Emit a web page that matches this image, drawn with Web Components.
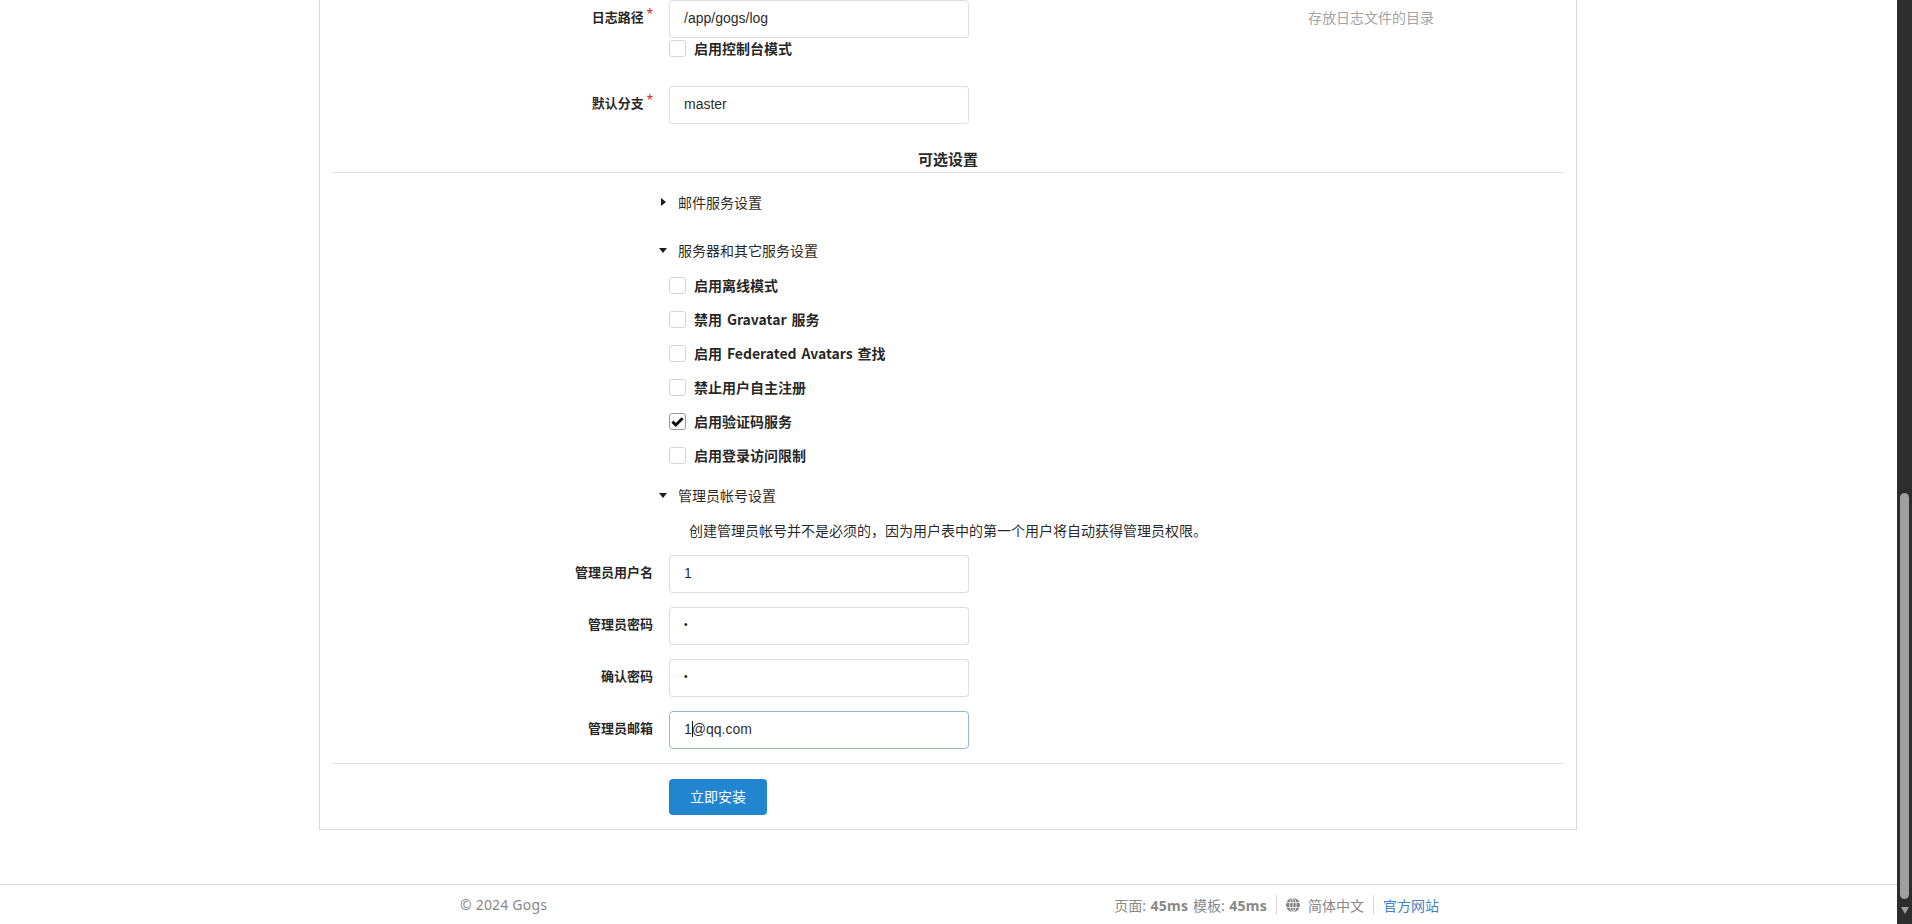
<!DOCTYPE html>
<html lang="zh-CN">
<head>
<meta charset="utf-8">
<title>Gogs install</title>
<style>
  html, body { margin: 0; height: 100%; overflow: hidden; background: #fff; }
  body { font-family: "Liberation Sans", "Noto Sans CJK SC", sans-serif; font-size: 14px; color: rgba(0,0,0,.87); }
</style>
</head>
<body>
<page-shell>
  <install-card>
    <form-field label="日志路径" required value="/app/gogs/log" hint="存放日志文件的目录" first></form-field>
    <check-field style="margin-top:2px">启用控制台模式</check-field>
    <form-field label="默认分支" required value="master" style="margin-top:29px"></form-field>

    <section-title>可选设置</section-title>

    <section-toggle style="margin-top:20px">邮件服务设置</section-toggle>
    <section-toggle open style="margin-top:28px">服务器和其它服务设置</section-toggle>

    <check-field style="margin-top:16px">启用离线模式</check-field>
    <check-field style="margin-top:17px">禁用 Gravatar 服务</check-field>
    <check-field style="margin-top:17px">启用 Federated Avatars 查找</check-field>
    <check-field style="margin-top:17px">禁止用户自主注册</check-field>
    <check-field checked style="margin-top:17px">启用验证码服务</check-field>
    <check-field style="margin-top:17px">启用登录访问限制</check-field>

    <section-toggle open style="margin-top:22px">管理员帐号设置</section-toggle>
    <admin-note>创建管理员帐号并不是必须的，因为用户表中的第一个用户将自动获得管理员权限。</admin-note>

    <form-field label="管理员用户名" value="1" style="margin-top:14px"></form-field>
    <form-field label="管理员密码" value="•" secret style="margin-top:14px"></form-field>
    <form-field label="确认密码" value="•" secret style="margin-top:14px"></form-field>
    <form-field label="管理员邮箱" value="1@qq.com" focused style="margin-top:14px"></form-field>

    <install-actions>立即安装</install-actions>
  </install-card>
  <page-footer slot="footer"></page-footer>
</page-shell>

<script>
// small helper so every element below reads the same way
function mount(el, html) {
  el.attachShadow({ mode: 'open' }).innerHTML = html;
}

class PageShell extends HTMLElement {
  constructor() {
    super();
    mount(this, `
      <style>
        :host { display: flex; height: 924px; overflow: hidden; }
        .main { flex: 1; min-width: 0; display: flex; flex-direction: column; }
        .bar { width: 15px; background: #2d2d2d; display: flex; flex-direction: column; align-items: center; padding-top: 493px; box-sizing: border-box; }
        .thumb { width: 9px; height: 406px; background: #9f9f9f; border-radius: 5px; }
        .arrow { margin-top: 8px; width: 0; height: 0; border-left: 4.5px solid transparent; border-right: 4.5px solid transparent; border-top: 7px solid #9f9f9f; }
      </style>
      <div class="main"><slot></slot><slot name="footer"></slot></div>
      <div class="bar"><div class="thumb"></div><div class="arrow"></div></div>
    `);
  }
}

class InstallCard extends HTMLElement {
  constructor() {
    super();
    mount(this, `
      <style>
        :host { display: block; width: 1258px; margin-left: 319px; box-sizing: border-box; border: 1px solid #d8d8d9; border-top: 0; padding: 0 13px 14px; }
      </style>
      <slot></slot>
    `);
  }
}

class FormField extends HTMLElement {
  constructor() {
    super();
    const label = this.getAttribute('label') || '';
    const value = this.getAttribute('value') || '';
    const hint = this.getAttribute('hint');
    const star = this.hasAttribute('required') ? '<span class="star">*</span>' : '';
    let text = value;
    if (this.hasAttribute('focused')) {
      // caret sits after the first character
      text = value.slice(0, 1) + '<i class="caret"></i>' + value.slice(1);
    }
    mount(this, `
      <style>
        :host { display: flex; align-items: center; height: 38px; }
        label { width: 320px; margin-right: 16px; text-align: right; font-size: 13px; font-weight: 700; line-height: 18px; padding-bottom: 2px; white-space: nowrap; }
        .star { display: inline-block; color: #db2828; font-weight: 400; font-size: 16px; vertical-align: top; margin: -2px 0 0 3px; line-height: 16px; }
        .input { width: 300px; height: 38px; box-sizing: border-box; border: 1px solid rgba(34,36,38,.15); border-radius: 4px; padding: 0 14px; line-height: 34px; font-size: 14px; color: rgba(0,0,0,.87); background: #fff; white-space: nowrap; }
        :host([focused]) .input { border-color: #92b9cd; }
        :host([secret]) .input { font-size: 10px; color: #111; }
        .caret { display: inline-block; width: 1px; height: 16px; background: #111; vertical-align: -3px; margin-right: -1px; }
        .hint { margin-left: 339px; font-size: 14px; line-height: 20px; color: #a3a3a3; padding-bottom: 2px; }
      </style>
      <label>${label}${star}</label>
      <div class="input" role="textbox">${text}</div>
      ${hint ? `<span class="hint">${hint}</span>` : ''}
    `);
  }
}

class CheckField extends HTMLElement {
  constructor() {
    super();
    const tick = this.hasAttribute('checked')
      ? '<svg viewBox="0 0 17 17" width="17" height="17"><path d="M3.4 8.6 L6.8 12 L13.6 5.2" fill="none" stroke="#111" stroke-width="3"/></svg>'
      : '';
    mount(this, `
      <style>
        :host { display: flex; align-items: center; height: 17px; margin-left: 336px; }
        .box { width: 17px; height: 17px; box-sizing: border-box; border: 1px solid #d4d4d5; border-radius: 3px; background: #fff; flex: none; position: relative; }
        :host([checked]) .box { border-color: #9a9a9a; }
        svg { position: absolute; left: -1px; top: -1px; }
        .text { margin-left: 8px; font-size: 14px; font-weight: 700; line-height: 17px; word-spacing: 1.7px; white-space: nowrap; font-family: "Noto Sans CJK SC", "Noto Sans", sans-serif; }
      </style>
      <div class="box">${tick}</div>
      <span class="text"><slot></slot></span>
    `);
  }
}

class SectionTitle extends HTMLElement {
  constructor() {
    super();
    mount(this, `
      <style>
        :host { display: block; text-align: center; font-size: 15px; font-weight: 700; line-height: 20px; padding: 26px 0 2px; border-bottom: 1px solid rgba(34,36,38,.15); }
      </style>
      <slot></slot>
    `);
  }
}

class SectionToggle extends HTMLElement {
  constructor() {
    super();
    const arrow = this.hasAttribute('open') ? '0,2 8,2 4,7' : '2,0 7,4 2,8';
    mount(this, `
      <style>
        :host { display: flex; align-items: center; height: 20px; margin-left: 326px; font-size: 14px; line-height: 20px; white-space: nowrap; }
        svg { flex: none; margin-right: 11px; position: relative; top: -1px; }
      </style>
      <svg width="8" height="8" viewBox="0 0 8 8"><polygon points="${arrow}" fill="#1b1c1d"/></svg>
      <slot></slot>
    `);
  }
}

class AdminNote extends HTMLElement {
  constructor() {
    super();
    mount(this, `
      <style>
        :host { display: block; margin: 15px 0 0 356px; font-size: 14px; line-height: 20px; white-space: nowrap; }
      </style>
      <slot></slot>
    `);
  }
}

class InstallActions extends HTMLElement {
  constructor() {
    super();
    mount(this, `
      <style>
        :host { display: block; margin-top: 14px; border-top: 1px solid rgba(34,36,38,.15); padding: 15px 0 0 336px; }
        button { display: block; width: 98px; height: 36px; border: 0; border-radius: 4px; background: #2185d0; color: #fff; font: 400 14px/36px "Liberation Sans", "Noto Sans CJK SC", sans-serif; padding: 0; }
      </style>
      <button type="button"><slot></slot></button>
    `);
  }
}

class PageFooter extends HTMLElement {
  constructor() {
    super();
    mount(this, `
      <style>
        :host { display: flex; justify-content: space-between; align-items: center; margin-top: 54px; height: 39px; border-top: 1px solid #d8d8d9; padding: 0 458px 0 460px; font-family: "Noto Sans", "Noto Sans CJK SC", sans-serif; font-size: 14px; color: #888; }
        .copy { letter-spacing: .2px; }
        .right { display: flex; align-items: center; }
        .stats { word-spacing: 1px; }
        b { letter-spacing: .25px; }
        .item { display: flex; align-items: center; height: 19px; }
        .sep { border-left: 1px solid #d8d8d9; margin-left: 9px; padding-left: 9px; }
        svg { margin-right: 8px; }
        a { color: #4183c4; text-decoration: none; }
      </style>
      <span class="copy">© 2024 Gogs</span>
      <div class="right">
        <span class="item"><span class="stats">页面: <b>45ms</b> 模板: <b>45ms</b></span></span>
        <span class="item sep">
          <svg width="14" height="14" viewBox="0 0 14 14">
            <circle cx="7" cy="7" r="7" fill="#808080"/>
            <g stroke="#fff" stroke-width=".8" fill="none">
              <ellipse cx="7" cy="7" rx="3.2" ry="7"/>
              <path d="M0 4.6H14M0 9.4H14M7 0V14"/>
            </g>
          </svg>
          <span>简体中文</span>
        </span>
        <span class="item sep"><a href="#">官方网站</a></span>
      </div>
    `);
  }
}

customElements.define('page-shell', PageShell);
customElements.define('install-card', InstallCard);
customElements.define('form-field', FormField);
customElements.define('check-field', CheckField);
customElements.define('section-title', SectionTitle);
customElements.define('section-toggle', SectionToggle);
customElements.define('admin-note', AdminNote);
customElements.define('install-actions', InstallActions);
customElements.define('page-footer', PageFooter);
</script>
</body>
</html>
